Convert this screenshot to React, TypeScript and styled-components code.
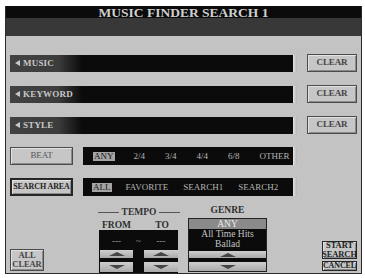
import React from 'react';
import styled, { createGlobalStyle } from 'styled-components';

const SERIF = '"Liberation Serif", "DejaVu Serif", "Times New Roman", serif';

const GlobalStyle = createGlobalStyle`
  html, body {
    margin: 0;
    padding: 0;
    background: #ffffff;
  }
  body {
    font-family: ${SERIF};
  }
`;

const Frame = styled.div`
  width: 355px;
  margin: 6px 0 0 5px;
  border-left: 1px solid #2a2a2a;
  border-right: 1px solid #2a2a2a;
  border-bottom: 1px solid #2a2a2a;
  background: #c3c3c3;
  font-family: ${SERIF};
`;

const TitleBar = styled.div`
  height: 12px;
  background: #0b0b0b;
  color: #cfcfcf;
  font-weight: bold;
  font-size: 13.5px;
  line-height: 12px;
  text-align: center;
  padding-top: 1px;
  box-sizing: border-box;
  white-space: nowrap;
`;

const SubBar = styled.div`
  height: 18px;
  background: #383838;
`;

const Body = styled.div`
  display: flex;
  flex-direction: column;
  padding: 18px 4px 0 4px;
`;

const Rows = styled.div`
  display: flex;
  flex-direction: column;
  gap: 13px;
`;

const FieldRow = styled.div`
  display: flex;
  align-items: center;
  height: 18px;
  gap: 10px;
`;

const FieldBar = styled.div`
  flex: 1;
  display: flex;
  height: 17px;
`;

const Track = styled.div`
  flex: 1;
  display: flex;
  align-items: center;
  gap: 3px;
  background: linear-gradient(to right, #424242 0, #3c3c3c 48px, #0b0b0b 72px);
  color: #c8c8c8;
  font-size: 9px;
  font-weight: bold;
  padding-left: 5px;
  letter-spacing: 0.2px;
`;

const EndStrip = styled.div`
  width: 4px;
  background: linear-gradient(to right, #e4e4e4, #b4b4b4);
`;

const PanelButton = styled.div<{ $w: number; $h?: number; $border?: number; $size?: number; $dark?: boolean }>`
  width: ${(p) => p.$w}px;
  height: ${(p) => p.$h ?? 18}px;
  box-sizing: border-box;
  display: flex;
  align-items: center;
  justify-content: center;
  text-align: center;
  background: #c6c6c6;
  border: ${(p) => p.$border ?? 1}px solid ${(p) => (p.$dark ? '#262626' : '#4c4c4c')};
  box-shadow: inset 1px 1px 0 #e2e2e2, inset -1px -1px 0 #8a8a8a;
  color: ${(p) => (p.$dark ? '#1e1e1e' : '#444')};
  font-size: ${(p) => p.$size ?? 9}px;
  font-weight: bold;
  line-height: ${(p) => (p.$size ?? 9) + 0.5}px;
  white-space: nowrap;
  letter-spacing: -0.1px;
  flex: none;
`;

const PlainLabel = styled.span`
  font-weight: normal;
  color: #555;
`;

const OptionRow = styled.div`
  display: flex;
  align-items: center;
  width: 287px;
  height: 18px;
  gap: 10px;
`;

const OptionBar = styled.div`
  flex: 1;
  display: flex;
  height: 18px;
`;

const OptionTrack = styled.div<{ $gap: number; $pad: number }>`
  flex: 1;
  display: flex;
  align-items: center;
  gap: ${(p) => p.$gap}px;
  padding-left: ${(p) => p.$pad}px;
  background: #0b0b0b;
`;

const Option = styled.span<{ $selected?: boolean }>`
  font-size: 9px;
  line-height: 9px;
  color: ${(p) => (p.$selected ? '#151515' : '#b4b4b4')};
  background: ${(p) => (p.$selected ? '#a4a4a4' : 'transparent')};
  padding: 0 1px;
`;

const BottomRow = styled.div`
  display: flex;
  align-items: flex-end;
  height: 77px;
`;

const TempoGroup = styled.div`
  width: 82px;
  margin-left: 54px;
  display: flex;
  flex-direction: column;
`;

const GroupTitle = styled.div`
  display: flex;
  align-items: center;
  gap: 3px;
  color: #333;
  font-size: 9.5px;
  font-weight: bold;
  line-height: 10px;
  height: 10px;
  &::before,
  &::after {
    content: '';
    flex: 1;
    height: 1px;
    background: #555;
  }
`;

const TempoHead = styled.div`
  display: grid;
  grid-template-columns: 35px 11px 34px;
  padding-left: 1px;
  margin-top: 3px;
  height: 10px;
  color: #2e2e2e;
  font-size: 9.5px;
  font-weight: bold;
  line-height: 10px;
  text-align: center;
`;

const TempoBox = styled.div`
  width: 79px;
  margin-left: 1px;
  background: #0b0b0b;
  display: grid;
  grid-template-columns: 33px 11px 34px;
  grid-template-rows: 20px 8px 4px 10px 1px;
  padding-left: 1px;
  box-sizing: border-box;
`;

const Dash = styled.div`
  grid-row: 1;
  color: #a8a8a8;
  font-size: 9px;
  display: flex;
  align-items: center;
  justify-content: center;
  padding-top: 1px;
`;

const StepButton = styled.div<{ $row: number; $col: number }>`
  grid-row: ${(p) => p.$row};
  grid-column: ${(p) => p.$col};
  background: linear-gradient(#cfcfcf, #a9a9a9);
  display: flex;
  align-items: center;
  justify-content: center;
`;

const GenreGroup = styled.div`
  width: 79px;
  margin-left: 8px;
  display: flex;
  flex-direction: column;
  margin-bottom: 1px;
`;

const GenreTitle = styled.div`
  text-align: center;
  color: #2e2e2e;
  font-size: 9.5px;
  font-weight: bold;
  line-height: 10px;
  margin-bottom: 3px;
`;

const GenreBox = styled.div`
  background: #0b0b0b;
  border: 1px solid #222;
  display: flex;
  flex-direction: column;
  height: 54px;
  box-sizing: border-box;
`;

const GenreItem = styled.div<{ $selected?: boolean }>`
  height: 10px;
  line-height: 10px;
  font-size: 9.5px;
  text-align: center;
  color: ${(p) => (p.$selected ? '#ececec' : '#c4c4c4')};
  background: ${(p) => (p.$selected ? '#8a8a8a' : 'transparent')};
`;

const GenreStep = styled.div<{ $h: number; $mt: number }>`
  height: ${(p) => p.$h}px;
  margin-top: ${(p) => p.$mt}px;
  background: linear-gradient(#cfcfcf, #a9a9a9);
  display: flex;
  align-items: center;
  justify-content: center;
`;

const AllClear = styled.div`
  margin-bottom: 2px;
`;

const ActionStack = styled.div`
  margin-left: 55px;
  display: flex;
  flex-direction: column;
  gap: 2px;
  margin-bottom: 2px;
`;

const Triangle = ({ up }: { up?: boolean }) => (
  <svg width="16" height="4" viewBox="0 0 16 4">
    <polygon points={up ? '8,0 16,4 0,4' : '0,0 16,0 8,4'} fill="#454545" />
  </svg>
);

const LeftArrow = () => (
  <svg width="5" height="6" viewBox="0 0 5 6">
    <polygon points="0,3 5,0 5,6" fill="#c8c8c8" />
  </svg>
);

const FIELDS = ['MUSIC', 'KEYWORD', 'STYLE'];

export default function App() {
  return (
    <>
      <GlobalStyle />
      <Frame>
        <TitleBar>MUSIC FINDER SEARCH 1</TitleBar>
        <SubBar />
        <Body>
          <Rows>
            {FIELDS.map((f) => (
              <FieldRow key={f}>
                <FieldBar>
                  <Track>
                    <LeftArrow />
                    {f}
                  </Track>
                  <EndStrip />
                </FieldBar>
                <PanelButton $w={50}>CLEAR</PanelButton>
              </FieldRow>
            ))}

            <OptionRow>
              <PanelButton $w={63}>
                <PlainLabel>BEAT</PlainLabel>
              </PanelButton>
              <OptionBar>
                <OptionTrack $gap={18} $pad={10}>
                  <Option $selected>ANY</Option>
                  <Option>2/4</Option>
                  <Option>3/4</Option>
                  <Option>4/4</Option>
                  <Option>6/8</Option>
                  <Option>OTHER</Option>
                </OptionTrack>
                <EndStrip />
              </OptionBar>
            </OptionRow>

            <OptionRow>
              <PanelButton $w={63} $border={2} $dark $size={8}>
                SEARCH AREA
              </PanelButton>
              <OptionBar>
                <OptionTrack $gap={13} $pad={9}>
                  <Option $selected>ALL</Option>
                  <Option>FAVORITE</Option>
                  <Option>SEARCH1</Option>
                  <Option>SEARCH2</Option>
                </OptionTrack>
                <EndStrip />
              </OptionBar>
            </OptionRow>
          </Rows>

          <BottomRow>
            <AllClear>
              <PanelButton $w={34} $h={22} $size={8.5}>
                ALL
                <br />
                CLEAR
              </PanelButton>
            </AllClear>

            <TempoGroup>
              <GroupTitle>TEMPO</GroupTitle>
              <TempoHead>
                <span>FROM</span>
                <span />
                <span>TO</span>
              </TempoHead>
              <TempoBox>
                <Dash>---</Dash>
                <Dash>~</Dash>
                <Dash>---</Dash>
                <StepButton $row={2} $col={1}>
                  <Triangle up />
                </StepButton>
                <StepButton $row={2} $col={3}>
                  <Triangle up />
                </StepButton>
                <StepButton $row={4} $col={1}>
                  <Triangle />
                </StepButton>
                <StepButton $row={4} $col={3}>
                  <Triangle />
                </StepButton>
              </TempoBox>
            </TempoGroup>

            <GenreGroup>
              <GenreTitle>GENRE</GenreTitle>
              <GenreBox>
                <GenreItem $selected>ANY</GenreItem>
                <GenreItem>All Time Hits</GenreItem>
                <GenreItem>Ballad</GenreItem>
                <GenreStep $h={7} $mt={2}>
                  <Triangle up />
                </GenreStep>
                <GenreStep $h={9} $mt={4}>
                  <Triangle />
                </GenreStep>
              </GenreBox>
            </GenreGroup>

            <ActionStack>
              <PanelButton $w={35} $h={18} $dark $size={8.5}>
                START
                <br />
                SEARCH
              </PanelButton>
              <PanelButton $w={35} $h={10} $dark $size={8}>
                CANCEL
              </PanelButton>
            </ActionStack>
          </BottomRow>
        </Body>
      </Frame>
    </>
  );
}
